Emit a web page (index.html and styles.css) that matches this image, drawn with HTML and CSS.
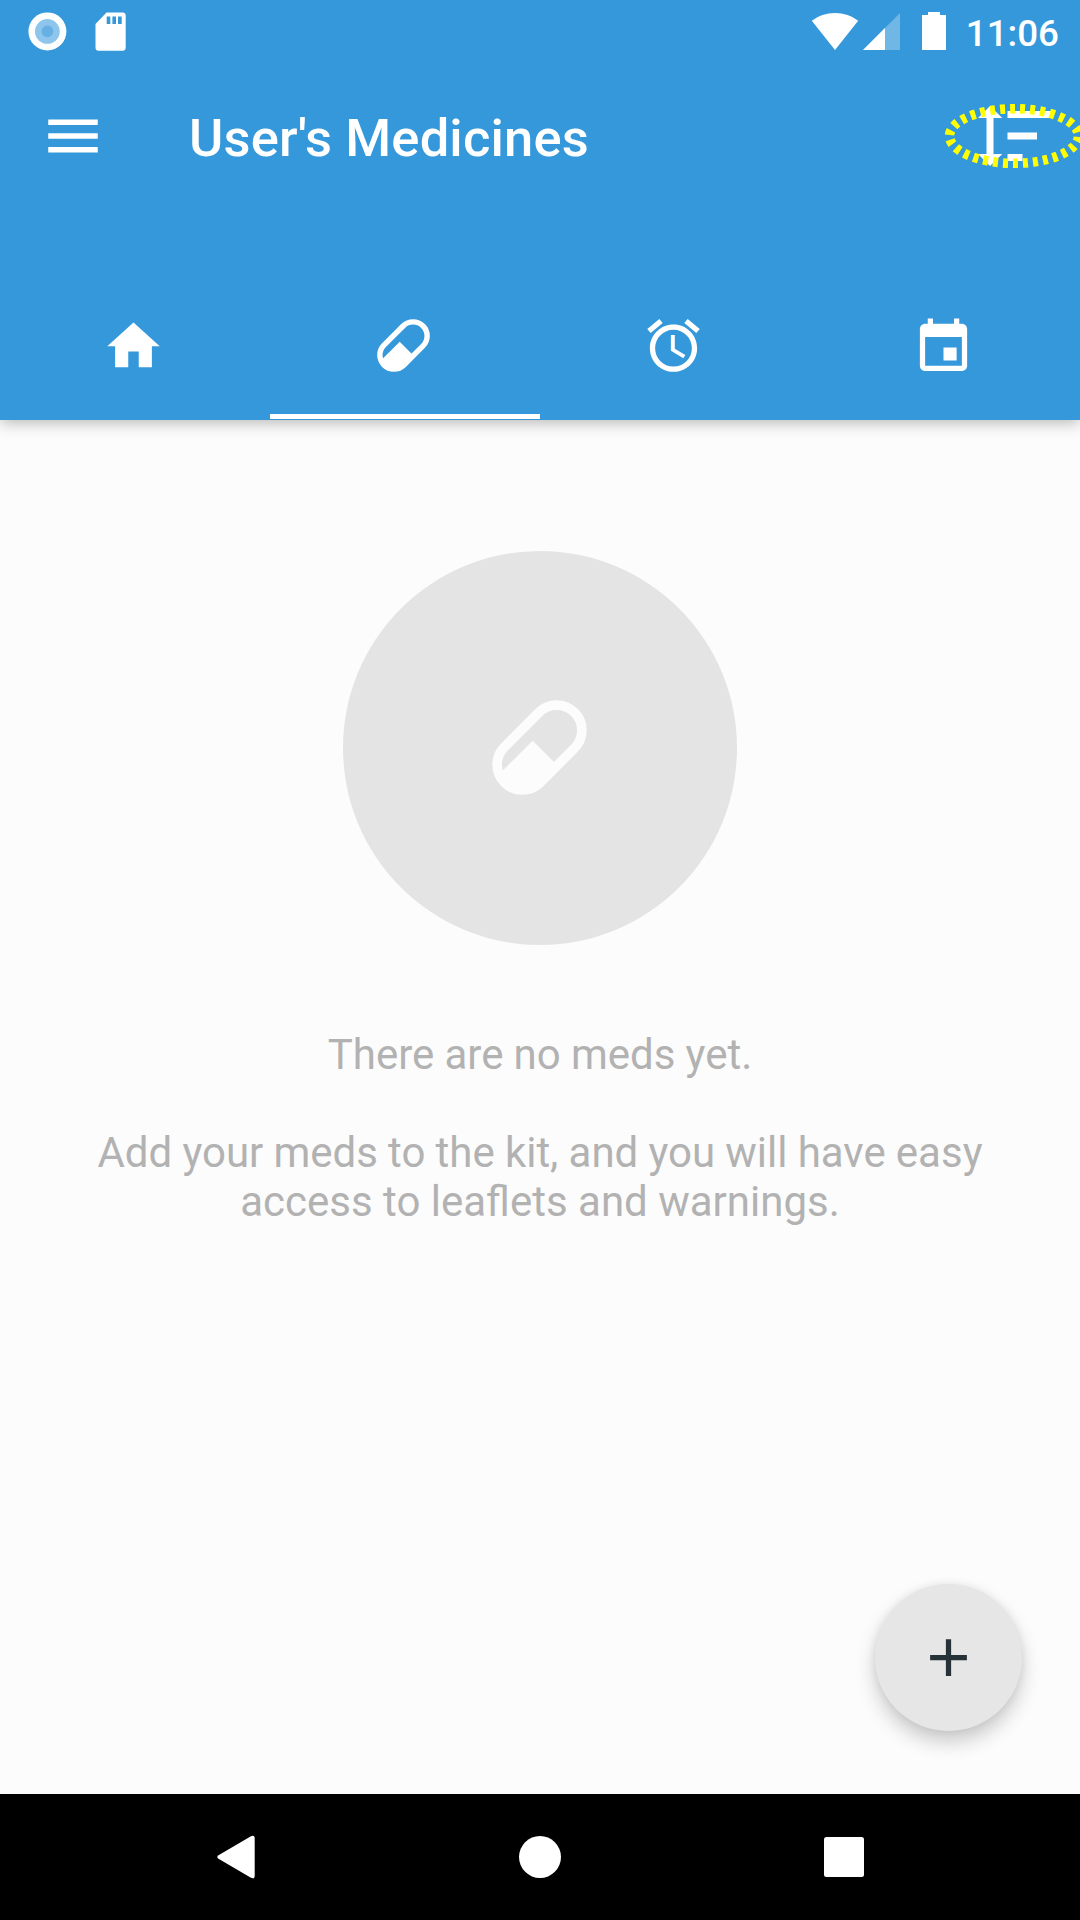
FILE: index.html
```html
<!DOCTYPE html>
<html lang="en">
<head>
<meta charset="utf-8">
<title>User's Medicines</title>
<link rel="stylesheet" href="styles.css">
</head>
<body>
<svg class="defs" width="0" height="0">
  <symbol id="pill" viewBox="0 0 24 24">
    <g transform="translate(12 12) rotate(-45)">
      <rect x="-10.51" y="-5.36" width="21.02" height="10.72" rx="5.36" fill="none" stroke="currentColor" stroke-width="2.05"/>
      <path fill="currentColor" d="M0-2.05H-10A5.36 5.36 0 0 0-5.15 5.36H0z"/>
    </g>
  </symbol>
</svg>
<div class="screen">
  <header class="header">
    <div class="status">
      <svg class="status-dot" width="40" height="40" viewBox="0 0 40 40"><circle cx="20.4" cy="20.4" r="19" fill="#fff"/><circle cx="20.4" cy="20.4" r="12.4" fill="#8ec5ec"/><circle cx="20.4" cy="20.4" r="5.8" fill="#67b0e3"/></svg>
      <svg class="status-card" width="31" height="39" viewBox="0 0 31 39"><path fill="#fff" fill-rule="evenodd" d="M11.5.5H27.5Q30.7.5 30.7 3.7V35.5Q30.7 38.7 27.5 38.7H3.7Q.5 38.7.5 35.5V12zM11.7 4.5v7.5h3.6V4.5zM17.4 4.5v7.5h3.6V4.5zM23 4.5v7.5h3.7V4.5z"/></svg>
      <div class="status-right">
        <svg width="48" height="38" viewBox="0 0 48 38"><path fill="#fff" d="M.8 8.7Q10.500 1 24 1T47.2 8.700L24 38z"/></svg>
        <svg class="signal" width="37" height="37" viewBox="0 0 37 37"><path fill="#fff" fill-opacity=".3" d="M37 0v37H0z"/><path fill="#fff" d="M22 15v22H0z"/></svg>
        <svg class="battery" width="24" height="38" viewBox="0 0 24 38"><path fill="#fff" d="M6 0h12v3h6v35H0V3h6z"/></svg>
        <span class="time">11:06</span>
      </div>
    </div>
    <div class="toolbar">
      <svg class="menu" width="66" height="66" viewBox="0 0 24 24"><path fill="#fff" d="M3 18h18v-2H3v2zm0-5h18v-2H3v2zm0-7v2h18V6H3z"/></svg>
      <h1 class="title">User's Medicines</h1>
      <div class="sort">
        <svg width="74" height="60" viewBox="0 0 74 60"><path fill="#fff" d="M12 0L24.300 12H15.500V48H24.300L12 60L0 48H8.500V12H0zM29.500 5H73V12H29.500zM29.500 26.500H59V33.500H29.500zM29.500 48H44.500V55H29.500z"/></svg>
        <svg class="highlight" width="140" height="70" viewBox="0 0 140 70"><ellipse cx="70" cy="35" rx="64.500" ry="27.300" fill="none" stroke="#ff0" stroke-width="9.500" stroke-dasharray="5 5" stroke-dashoffset="-1"/></svg>
      </div>
    </div>
    <nav class="tabs">
      <div class="tab"><svg width="63" height="63" viewBox="0 0 24 24"><path fill="#fff" transform="translate(0 .25)" d="M10 20v-6h4v6h5v-8h3L12 3 2 12h3v8z"/></svg></div>
      <div class="tab active"><svg width="63" height="63"><use href="#pill"/></svg></div>
      <div class="tab"><svg width="63" height="63" viewBox="0 0 24 24"><path fill="#fff" d="M22 5.720l-4.600-3.860-1.290 1.530 4.600 3.860L22 5.720zM7.880 3.390L6.600 1.860 2 5.710l1.290 1.530 4.590-3.850zM12.500 8H11v6l4.750 2.850.75-1.230-4-2.370V8zM12 4c-4.970 0-9 4.030-9 9s4.020 9 9 9c4.970 0 9-4.030 9-9s-4.030-9-9-9zm0 16c-3.870 0-7-3.130-7-7s3.130-7 7-7 7 3.130 7 7-3.130 7-7 7z"/></svg></div>
      <div class="tab"><svg width="63" height="63" viewBox="0 0 24 24"><path fill="#fff" transform="translate(0 .75)" d="M17 12h-5v5h5v-5zM16 1v2H8V1H6v2H5c-1.110 0-1.990.9-1.990 2L3 19c0 1.100.89 2 2 2h14c1.100 0 2-.9 2-2V5c0-1.100-.9-2-2-2h-1V1h-2zm3 18H5V8h14v11z"/></svg></div>
    </nav>
  </header>
  <main class="content">
    <div class="empty-icon"><svg width="113" height="113"><use href="#pill"/></svg></div>
    <p class="message"><span class="tight">There are no meds yet.</span></p>
    <p class="message"><span class="tight">Add your meds to the kit, and you will have easy</span><br>access to leaflets and warnings.</p>
    <button class="fab" aria-label="Add"><svg width="63" height="63" viewBox="0 0 24 24"><path fill="#263238" d="M19 13h-6v6h-2v-6H5v-2h6V5h2v6h6v2z"/></svg></button>
  </main>
  <footer class="navbar">
    <svg width="42" height="44" viewBox="0 0 42 44"><path fill="#fff" d="M3.500 20.200L35.500 1.400Q39.700-.8 39.700 3.500V40.500Q39.700 44.800 35.500 42.600L3.500 23.800Q1 22 3.500 20.200z"/></svg>
    <svg width="42" height="42" viewBox="0 0 42 42"><circle cx="21" cy="21" r="21" fill="#fff"/></svg>
    <svg width="40" height="40" viewBox="0 0 40 40"><rect width="40" height="40" rx="2.500" fill="#fff"/></svg>
  </footer>
</div>
</body>
</html>
```
FILE: styles.css
```css
* { box-sizing: border-box; }
body { margin: 0; font-family: Roboto, "Liberation Sans", sans-serif; }
svg { display: block; flex: none; }
.defs { position: absolute; }
.screen {
  width: 1080px;
  height: 1920px;
  display: flex;
  flex-direction: column;
  background: #fcfcfc;
  overflow: hidden;
}
.header {
  height: 420px;
  display: flex;
  flex-direction: column;
  background: #3498db;
  color: #fff;
  box-shadow: 0 2px 15px rgba(0, 0, 0, .3);
}
.status { height: 63px; display: flex; align-items: flex-start; padding: 11px 21px 0 27px; }
.status-card { margin: 1px 0 0 28px; }
.status-right { margin-left: auto; display: flex; align-items: flex-start; padding-top: 1px; }
.signal { margin: 1px 0 0 4px; }
.battery { margin-left: 22px; }
.time { margin-left: 20px; font-size: 36.75px; line-height: 44px; font-weight: 500; }
.toolbar { height: 147px; display: flex; align-items: center; padding: 0 28px 2px 40px; }
.menu { margin-right: 83px; }
.title { margin: 5px 0 0; font-size: 52.5px; line-height: 62px; font-weight: 500; letter-spacing: .16px; }
.sort { position: relative; margin-left: auto; }
.highlight { position: absolute; left: -34px; top: -5px; }
.tabs { margin-top: auto; height: 126px; display: grid; grid-template-columns: repeat(4, 1fr); }
.tab {
  display: flex;
  justify-content: center;
  padding: 20px 3px 0 0;
}
.tab.active { background: linear-gradient(#fff, #fff) 0 120px / 100% 5px no-repeat; }
.content {
  flex: 1;
  display: flex;
  flex-direction: column;
  align-items: center;
  padding-top: 131px;
}
.empty-icon {
  width: 394px;
  height: 394px;
  margin-bottom: 85px;
  padding: 0 1px 1px 0;
  border-radius: 50%;
  background: #e4e4e4;
  color: #fcfcfc;
  display: flex;
  align-items: center;
  justify-content: center;
}
.message { margin: 0 0 49px; font-size: 42px; line-height: 49px; color: #b2b2b2; text-align: center; white-space: nowrap; }
.tight { word-spacing: -.25px; }
.fab {
  width: 147px;
  height: 147px;
  margin: auto 58px 63px auto;
  padding: 0 1px 1px 0;
  border: 0;
  border-radius: 50%;
  background: #e6e6e6;
  box-shadow: 0 11px 20px rgba(0, 0, 0, .2), 0 0 8px rgba(0, 0, 0, .07);
  display: flex;
  align-items: center;
  justify-content: center;
}
.navbar {
  height: 126px;
  padding: 0 84px;
  background: #000;
  display: grid;
  grid-template-columns: repeat(3, 1fr);
  align-items: center;
  justify-items: center;
}
```
